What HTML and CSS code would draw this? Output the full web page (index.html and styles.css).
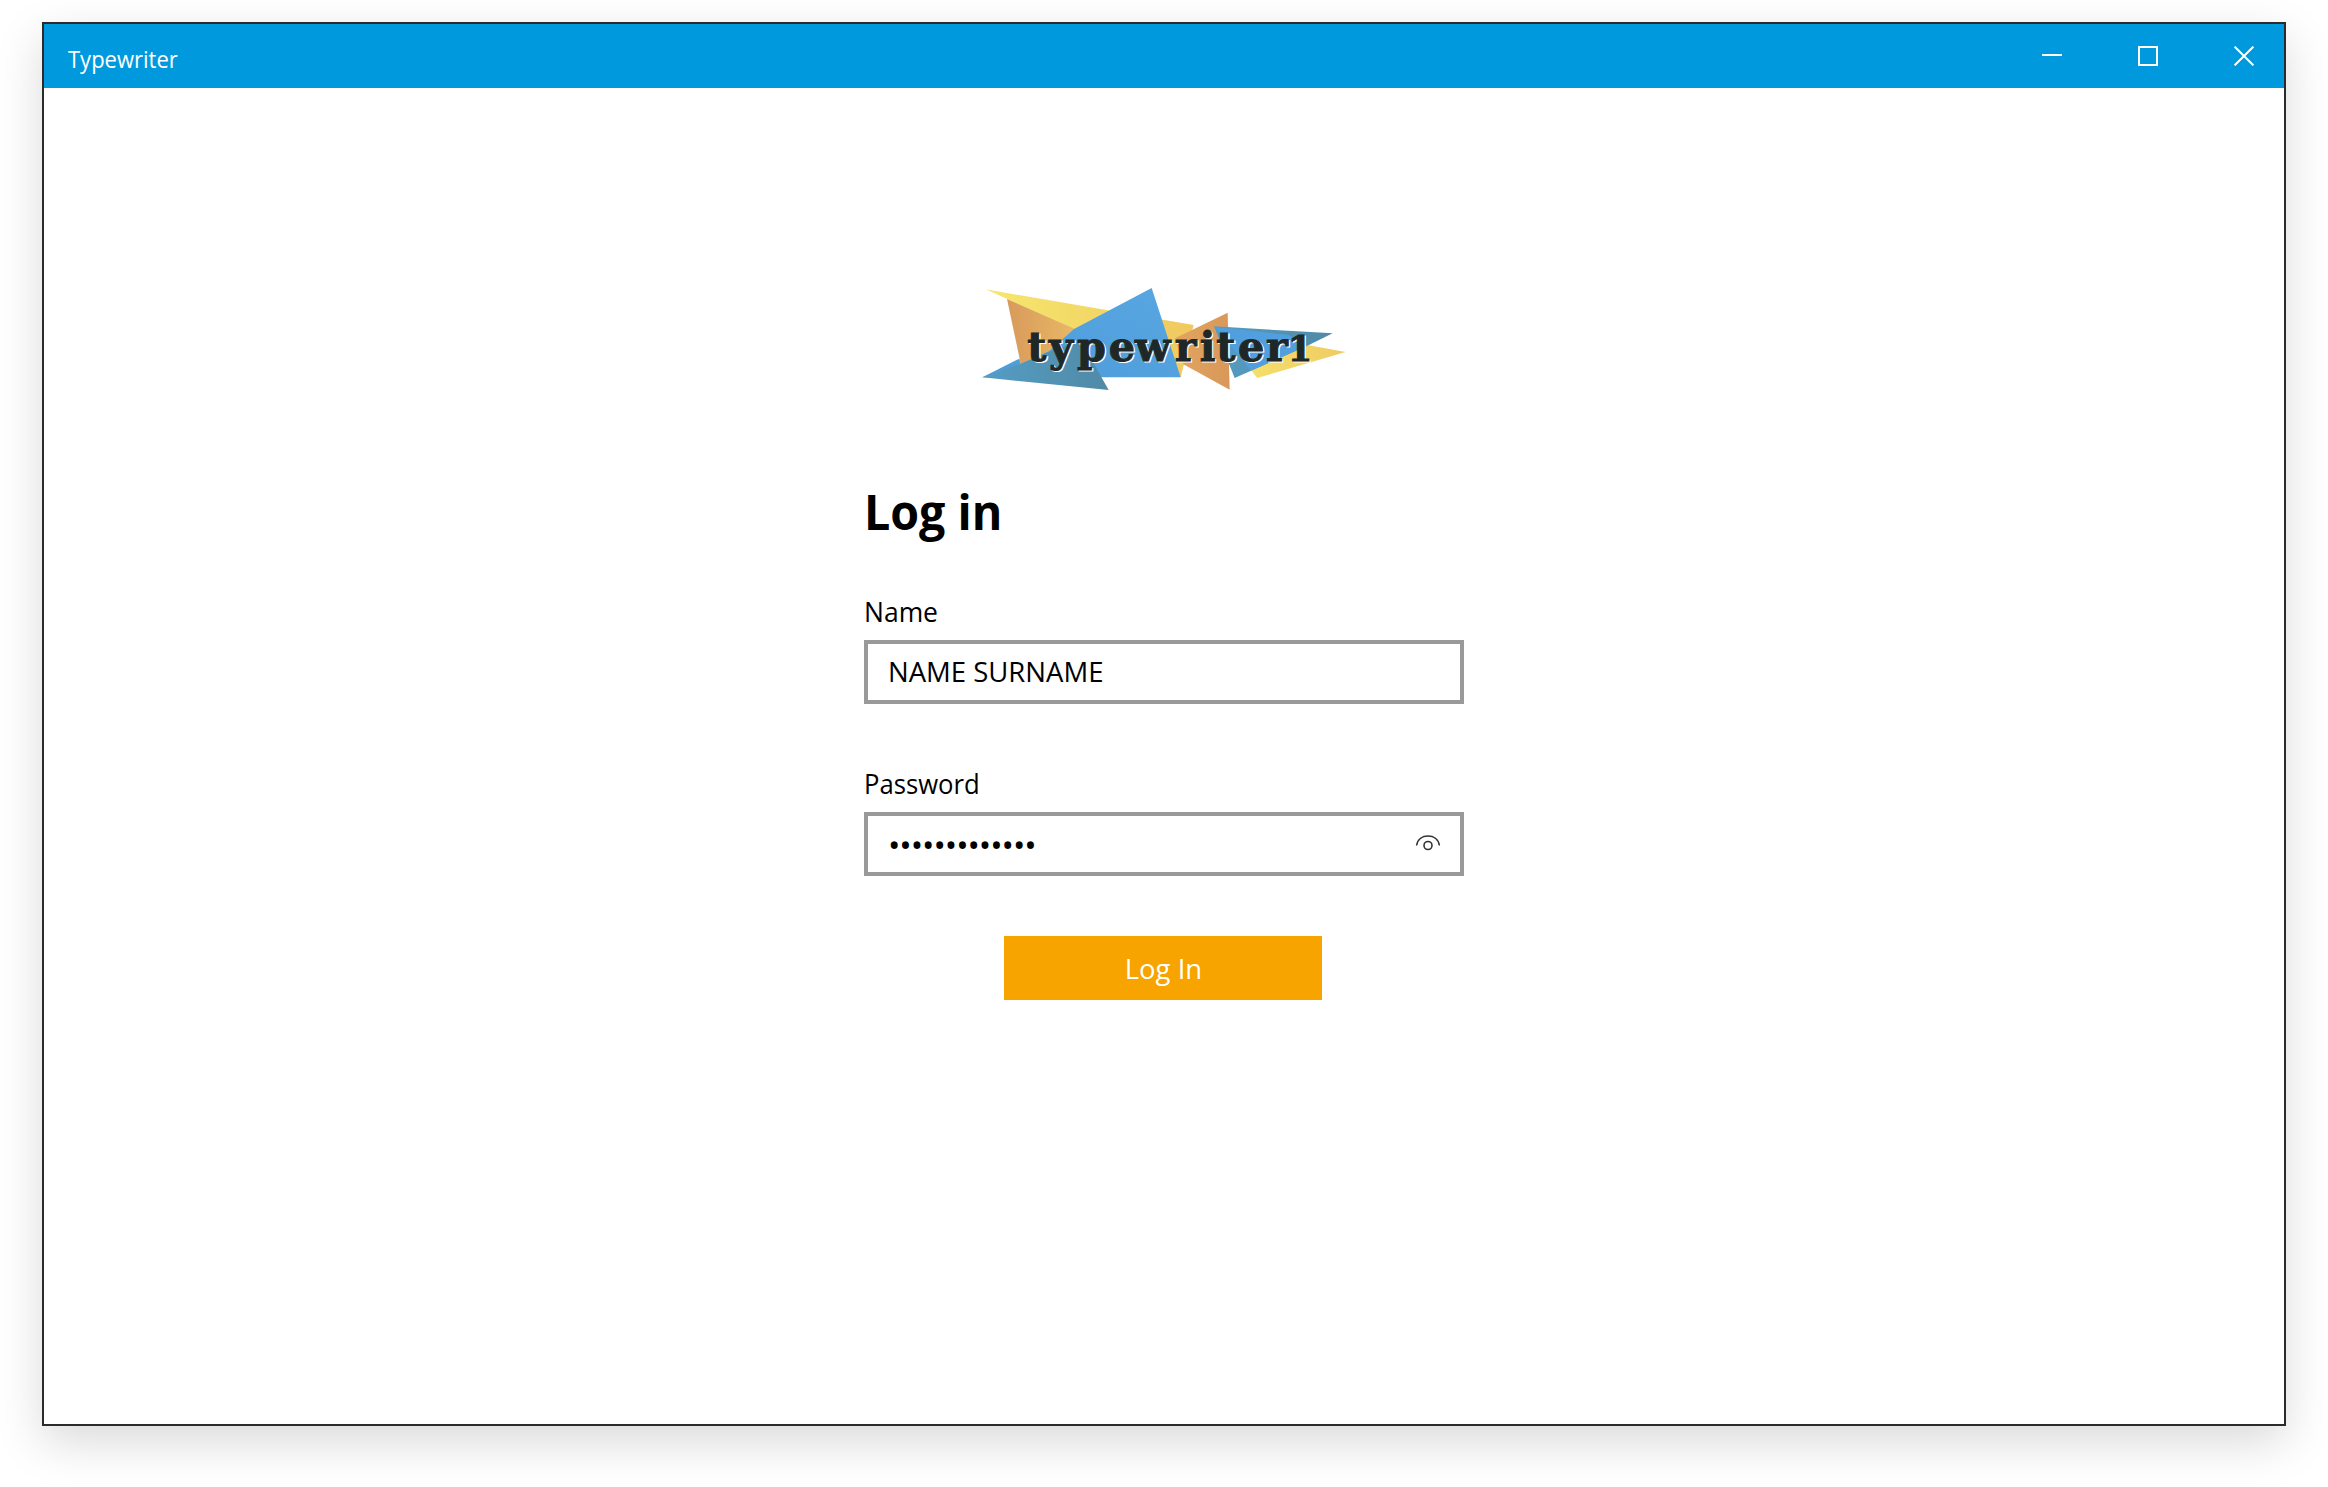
FILE: index.html
```html
<!DOCTYPE html>
<html lang="en">
<head>
<meta charset="utf-8">
<title>Typewriter</title>
<link rel="stylesheet" href="styles.css">
</head>
<body>
<div class="window">
  <header class="titlebar">
    <span class="app-name"><span class="fit fit-app">Typewriter</span></span>
    <div class="controls">
      <svg class="control" width="20" height="20" viewBox="0 0 20 20"><path d="M0 9h20"/></svg>
      <svg class="control" width="20" height="20" viewBox="0 0 20 20"><path d="M1 1h18v18H1z"/></svg>
      <svg class="control" width="20" height="20" viewBox="0 0 20 20"><path d="M.6.6l18.8 18.8M19.4.6L.6 19.4"/></svg>
    </div>
  </header>
  <main class="content">
    <svg class="logo" width="390" height="130" viewBox="0 0 1170 390">
      <defs>
        <linearGradient id="yellow"><stop offset="0" stop-color="#f6e76e"/><stop offset="1" stop-color="#f0c95f"/></linearGradient>
        <linearGradient id="yellow2"><stop offset="0" stop-color="#f4df6c"/><stop offset="1" stop-color="#efcb62"/></linearGradient>
        <linearGradient id="orange"><stop offset="0" stop-color="#d89a5b"/><stop offset="1" stop-color="#e8b866"/></linearGradient>
        <linearGradient id="orange2"><stop offset="0" stop-color="#e2a55e"/><stop offset="1" stop-color="#d8985a"/></linearGradient>
        <linearGradient id="teal"><stop offset="0" stop-color="#549dc4"/><stop offset="1" stop-color="#508aa6"/></linearGradient>
        <linearGradient id="blue" x1="0" y1="1" x2="1" y2="0"><stop offset="0" stop-color="#4d9cda"/><stop offset="1" stop-color="#58a7e2"/></linearGradient>
      </defs>
      <path fill="url(#yellow)" d="M47 43L671 150L632 307L312 162Z"/>
      <path fill="url(#orange)" d="M111 72L315 162L240 230L152 266Z"/>
      <path fill="url(#blue)" d="M312 162L545 39L632 307H397L37 307L148 251L152 266L238 228Z"/>
      <path fill="url(#teal)" d="M37 307L152 266L238 230L322 200L365 255L416 345Z"/>
      <path fill="url(#orange2)" d="M773 113L779 344L640 268L615 190Z"/>
      <path fill="url(#yellow2)" d="M1000 208L1127 231L862 309L840 282Z"/>
      <path fill="url(#teal)" d="M732 154L1088 175L1012 212L794 309Z"/>
      <path fill="#519fdf" d="M735 156L955 180L1012 212L842 287Z"/>
      <g class="wordmark">
        <text class="wordmark-edge" x="176 241 325 420 499 618 693 743 808 892 957" y="262">typewriter<tspan class="numeral">1</tspan></text>
        <text class="wordmark-face" x="172 237 321 416 495 614 689 739 804 888 953" y="258">typewriter<tspan class="numeral">1</tspan></text>
      </g>
    </svg>
    <form class="login">
      <h1 class="heading"><span class="fit fit-heading">Log in</span></h1>
      <div class="field">
        <label class="label"><span class="fit fit-name">Name</span></label>
        <div class="input"><span class="fit fit-value">NAME SURNAME</span></div>
      </div>
      <div class="field">
        <label class="label"><span class="fit fit-password">Password</span></label>
        <div class="input">
          <span class="dots">•••••••••••••</span>
          <svg class="eye" width="26" height="18" viewBox="0 0 26 18"><path d="M1.600 11.500C2.600 5 7.500 2 13 2s10.400 3 11.400 9.500"/><circle cx="13" cy="11.500" r="4"/></svg>
        </div>
      </div>
      <button class="submit" type="button"><span class="fit fit-submit">Log In</span></button>
    </form>
  </main>
</div>
</body>
</html>
```
FILE: styles.css
```css
* { box-sizing: border-box; }
body {
  margin: 0;
  padding: 22px 42px 61px;
  height: 1487px;
  background: #fff;
  color: #000;
  font-family: "Open Sans", "Noto Sans", sans-serif;
  overflow: hidden;
}
.window {
  height: 1404px;
  border: 2px solid #2b2b2d;
  background: #fff;
  box-shadow: 0 16px 44px rgba(0, 0, 0, .15);
}
.titlebar {
  height: 64px;
  padding: 0 28px 0 24px;
  display: flex;
  justify-content: space-between;
  background: #0099de;
  color: #fff;
}
.app-name { font-size: 24px; line-height: 32px; padding-top: 19px; }
.controls { display: flex; gap: 76px; padding: 22px 2px 0 0; }
.control { fill: none; stroke: #fff; stroke-width: 2; }
.content { display: flex; flex-direction: column; align-items: center; padding-top: 187px; }
.logo { display: block; margin-left: 2px; }
.wordmark { font: bold 124px "DejaVu Serif", serif; stroke-width: 3; }
.numeral { font-size: 106px; }
.wordmark-face { fill: #202827; stroke: #202827; }
.wordmark-edge { fill: #fff; stroke: #fff; }
.login { width: 600px; display: flex; flex-direction: column; }

.fit { display: inline-block; white-space: nowrap; transform-origin: 0 50%; }
.fit-app { transform: scaleX(.917); }
.fit-heading { transform: scaleX(.98); }
.fit-name { transform: translateY(-1px) scaleX(.945); }
.fit-value { transform: translateY(-1px) scaleX(.982); }
.fit-password { transform: translateY(-1px) scaleX(.917); }
.fit-submit { transform: scaleX(.98); transform-origin: 50% 50%; }

.heading { margin: 75px 0 0; font-size: 47.5px; line-height: 64px; font-weight: 700; }
.field { margin-top: 50px; }
.field + .field { margin-top: 62px; }
.label { display: block; height: 46px; font-size: 28px; line-height: 36px; }
.input {
  height: 64px;
  border: 4px solid #999;
  padding: 0 19px 0 20px;
  display: flex;
  align-items: center;
  justify-content: space-between;
  font-size: 28px;
  line-height: 36px;
}
.dots { font-size: 33px; letter-spacing: -1.05px; padding-top: 1px; }
.eye { fill: none; stroke: #333; stroke-width: 1.6; margin-bottom: 2px; }
.submit {
  margin: 60px 0 0 140px;
  width: 318px;
  height: 64px;
  padding: 0;
  border: 0;
  background: #f7a300;
  color: #fff;
  font: 28px/36px "Open Sans", "Noto Sans", sans-serif;
}
```
